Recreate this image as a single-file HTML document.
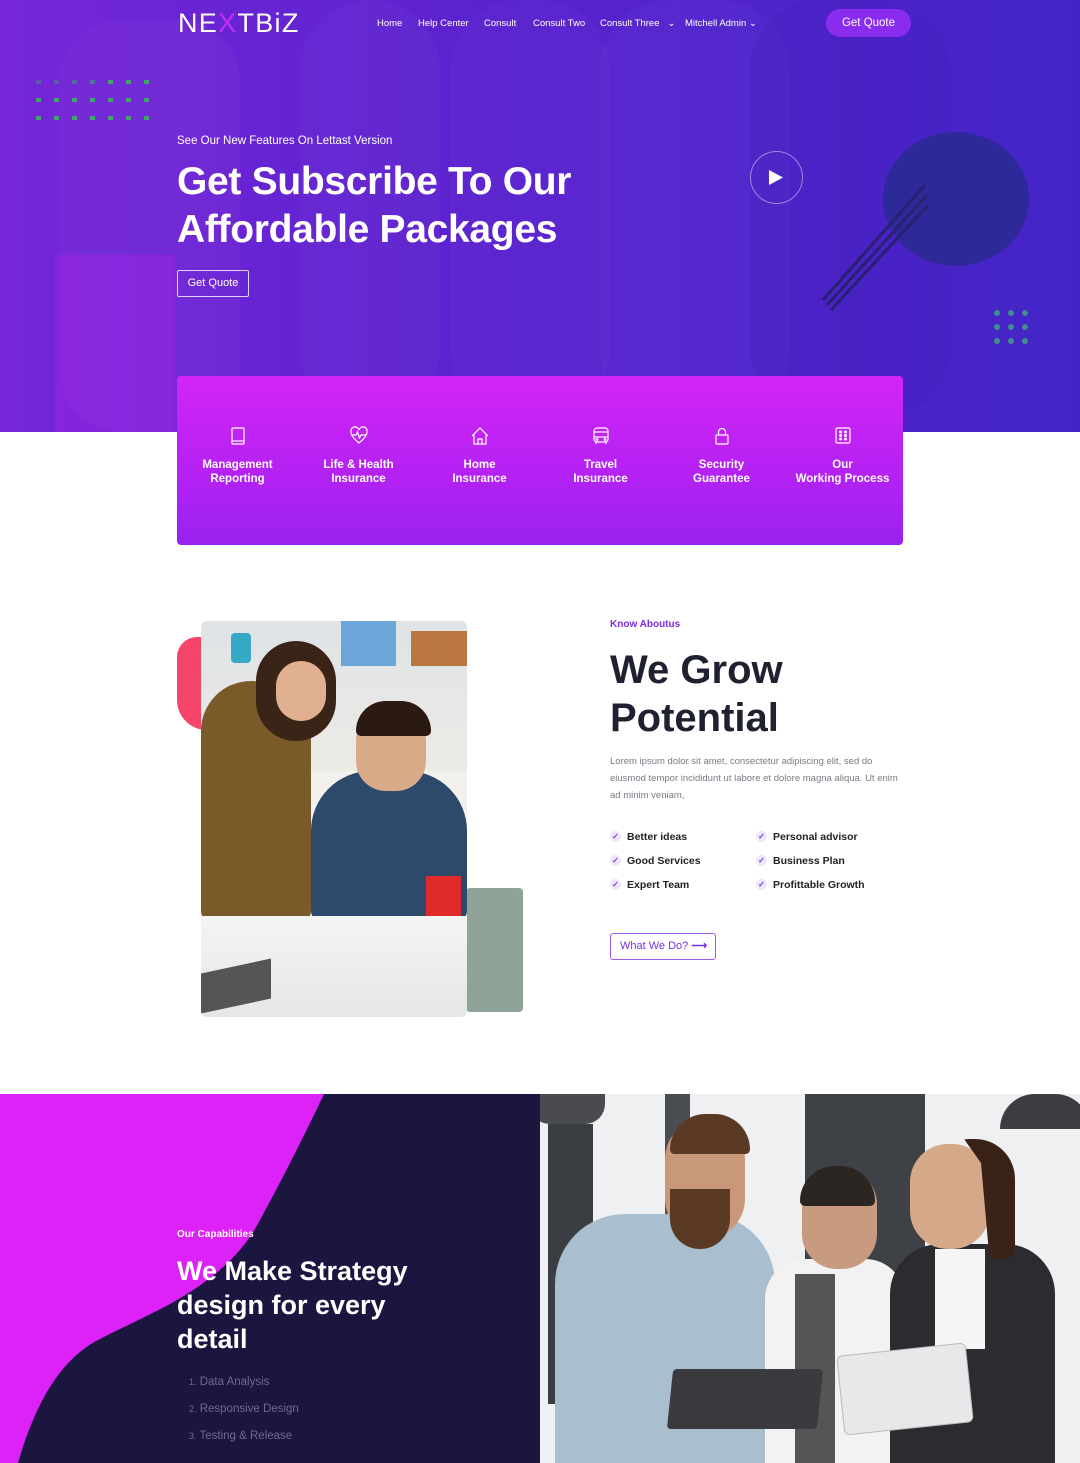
<!DOCTYPE html>
<html><head><meta charset="utf-8"><style>
*{margin:0;padding:0;box-sizing:border-box}
body{width:1080px;height:1463px;overflow:hidden;background:#fff;font-family:"Liberation Sans",sans-serif;position:relative}
.abs{position:absolute}
.hero{left:0;top:0;width:1080px;height:432px;background:linear-gradient(90deg,#7526d8 0%,#5a22cf 45%,#4325c6 100%);overflow:hidden}
.nav a{position:absolute;top:18px;color:#fff;font-size:9.5px}
.card{left:177px;top:376px;width:726px;height:169px;border-radius:4px;background:linear-gradient(180deg,#d324f8 0%,#b622f3 55%,#9a22ee 100%)}
.it{position:absolute;top:50px;width:121px;text-align:center;color:#fff;font-weight:bold;font-size:11.5px;line-height:14px}
.it svg{display:block;margin:0 auto 12px;width:18px;height:20px}
.chk{position:absolute;font-size:10.5px;color:#222;font-weight:bold}
.chk i{display:inline-block;width:11px;height:11px;border-radius:50%;background:#eee6fb;color:#7a32e6;font-style:normal;font-size:8px;text-align:center;line-height:11px;margin-right:6px;vertical-align:1px}
</style></head><body>
<div class="abs hero">
 <div class="abs" style="left:60px;top:20px;width:180px;height:412px;background:rgba(160,80,220,.12);border-radius:60px"></div>
 <div class="abs" style="left:300px;top:0;width:140px;height:420px;background:rgba(140,90,220,.1);border-radius:70px"></div>
 <div class="abs" style="left:450px;top:0;width:160px;height:420px;background:rgba(130,80,220,.1);border-radius:70px"></div>
 <div class="abs" style="left:600px;top:0;width:190px;height:420px;background:rgba(120,90,220,.1);border-radius:70px"></div>
 <div class="abs" style="left:750px;top:0;width:200px;height:420px;background:rgba(60,30,170,.15);border-radius:70px"></div>
 <div class="abs" style="left:55px;top:255px;width:120px;height:245px;background:rgba(200,30,240,.25)"></div>
 <div class="abs" style="left:883px;top:132px;width:146px;height:134px;border-radius:50%;background:#2a2a90;opacity:.85"></div>
 <svg class="abs" style="left:815px;top:175px" width="120" height="140"><g stroke="#2a2070" stroke-width="3"><line x1="8" y1="125" x2="110" y2="10"/><line x1="12" y1="130" x2="112" y2="20"/><line x1="16" y1="135" x2="113" y2="30"/></g></svg>
 <svg class="abs" style="left:35px;top:80px" width="120" height="45"><g fill="#3fa56a"><rect x="1" y="0" width="5" height="4" opacity=".4"/><rect x="19" y="0" width="5" height="4" opacity=".4"/><rect x="37" y="0" width="5" height="4" opacity=".5"/><rect x="55" y="0" width="5" height="4" opacity=".6"/><rect x="73" y="0" width="5" height="4"/><rect x="91" y="0" width="5" height="4"/><rect x="109" y="0" width="5" height="4"/>
 <rect x="1" y="18" width="5" height="4"/><rect x="19" y="18" width="5" height="4"/><rect x="37" y="18" width="5" height="4"/><rect x="55" y="18" width="5" height="4"/><rect x="73" y="18" width="5" height="4"/><rect x="91" y="18" width="5" height="4"/><rect x="109" y="18" width="5" height="4"/>
 <rect x="1" y="36" width="5" height="4"/><rect x="19" y="36" width="5" height="4"/><rect x="37" y="36" width="5" height="4"/><rect x="55" y="36" width="5" height="4"/><rect x="73" y="36" width="5" height="4"/><rect x="91" y="36" width="5" height="4"/><rect x="109" y="36" width="5" height="4"/></g></svg>
 <svg class="abs" style="left:990px;top:308px" width="40" height="40"><g fill="#3f8f8a"><circle cx="7" cy="5" r="3"/><circle cx="21" cy="5" r="3"/><circle cx="35" cy="5" r="3"/><circle cx="7" cy="19" r="3"/><circle cx="21" cy="19" r="3"/><circle cx="35" cy="19" r="3"/><circle cx="7" cy="33" r="3"/><circle cx="21" cy="33" r="3"/><circle cx="35" cy="33" r="3"/></g></svg>
 <div class="abs" style="left:178px;top:8px;color:#fff;font-size:27px;letter-spacing:1.3px">NE<span style="color:#c530f0">X</span>TBiZ</div>
 <div class="nav"><a style="left:377px">Home</a><a style="left:418px">Help Center</a><a style="left:484px">Consult</a><a style="left:533px">Consult Two</a><a style="left:600px">Consult Three &nbsp;&nbsp;⌄</a><a style="left:685px">Mitchell Admin ⌄</a></div>
 <div class="abs" style="left:826px;top:9px;width:85px;height:28px;border-radius:14px;background:#8a2cf0;color:#fff;font-size:11.5px;text-align:center;line-height:28px">Get Quote</div>
 <div class="abs" style="left:177px;top:135px;color:#fff;font-size:11.5px">See Our New Features On Lettast Version</div>
 <div class="abs" style="left:177px;top:158px;color:#fff;font-size:39px;font-weight:bold;line-height:48px;letter-spacing:-.3px">Get Subscribe To Our<br>Affordable Packages</div>
 <div class="abs" style="left:177px;top:270px;width:72px;height:27px;border:1px solid rgba(255,255,255,.8);border-radius:2px;color:#fff;font-size:11px;text-align:center;line-height:25px">Get Quote</div>
 <div class="abs" style="left:750px;top:151px;width:53px;height:53px;border:1px solid rgba(255,255,255,.45);border-radius:50%"></div>
 <svg class="abs" style="left:768px;top:169px" width="16" height="17"><path d="M1 1L15 8.5L1 16Z" fill="#fff"/></svg>
</div>
<div class="abs card">
 <div class="it" style="left:0"><svg viewBox="0 0 18 20" fill="none" stroke="#fff" stroke-width="1.2"><rect x="3" y="2" width="12" height="16" rx="1"/><line x1="3" y1="15" x2="15" y2="15"/></svg>Management<br>Reporting</div>
 <div class="it" style="left:121px"><svg viewBox="0 0 18 20" fill="none" stroke="#fff" stroke-width="1.2"><path d="M9 17C3 12 1 9 1 6A4 4 0 0 1 9 4A4 4 0 0 1 17 6C17 9 15 12 9 17Z"/><path d="M2 9H6L7.5 6L9.5 12L11 9H16"/></svg>Life &amp; Health<br>Insurance</div>
 <div class="it" style="left:242px"><svg viewBox="0 0 18 20" fill="none" stroke="#fff" stroke-width="1.2"><path d="M1 10L9 2L17 10M3 8V18H15V8M7 18V13H11V18"/></svg>Home<br>Insurance</div>
 <div class="it" style="left:363px"><svg viewBox="0 0 18 20" fill="none" stroke="#fff" stroke-width="1.2"><rect x="2" y="2" width="14" height="14" rx="3"/><line x1="2" y1="6" x2="16" y2="6"/><line x1="2" y1="11" x2="16" y2="11"/><circle cx="5" cy="13.5" r=".8"/><circle cx="13" cy="13.5" r=".8"/><path d="M4 16V18M14 16V18"/></svg>Travel<br>Insurance</div>
 <div class="it" style="left:484px"><svg viewBox="0 0 18 20" fill="none" stroke="#fff" stroke-width="1.2"><rect x="3" y="9" width="12" height="9" rx="1"/><path d="M5.5 9V6A3.5 3.5 0 0 1 12.5 6V9"/></svg>Security<br>Guarantee</div>
 <div class="it" style="left:605px"><svg viewBox="0 0 18 20" fill="none" stroke="#fff" stroke-width="1.2"><rect x="2" y="2" width="14" height="15" rx="1.5"/><g fill="#fff"><circle cx="6.5" cy="6" r=".9"/><circle cx="11.5" cy="6" r=".9"/><circle cx="6.5" cy="9.5" r=".9"/><circle cx="11.5" cy="9.5" r=".9"/><circle cx="6.5" cy="13" r=".9"/><circle cx="11.5" cy="13" r=".9"/></g></svg>Our<br>Working Process</div>
</div>
<!-- about -->
<div class="abs" style="left:177px;top:637px;width:40px;height:93px;background:#f5456a;border-radius:20px 0 0 30px"></div>
<div class="abs" style="left:466px;top:888px;width:57px;height:124px;background:#8fa399;border-radius:4px"></div>
<div class="abs" style="left:201px;top:621px;width:266px;height:396px;border-radius:6px;overflow:hidden;background:#f3f1ee">
 <div class="abs" style="left:0;top:0;width:266px;height:150px;background:linear-gradient(180deg,#dfe3e6,#ecebe6)"></div>
 <div class="abs" style="left:140px;top:0;width:55px;height:45px;background:#6aa7d8"></div>
 <div class="abs" style="left:210px;top:10px;width:56px;height:35px;background:#b97840"></div>
 <div class="abs" style="left:30px;top:12px;width:20px;height:30px;background:#35a9c8;border-radius:4px"></div>
 <div class="abs" style="left:0;top:60px;width:110px;height:240px;background:#7a5a28;border-radius:50px 60px 10px 10px"></div>
 <div class="abs" style="left:55px;top:20px;width:80px;height:100px;background:#3a2418;border-radius:40px"></div>
 <div class="abs" style="left:75px;top:40px;width:50px;height:60px;background:#e0b090;border-radius:25px"></div>
 <div class="abs" style="left:110px;top:150px;width:156px;height:150px;background:#2d4a6c;border-radius:60px 60px 10px 10px"></div>
 <div class="abs" style="left:155px;top:90px;width:70px;height:80px;background:#d9aa88;border-radius:30px"></div>
 <div class="abs" style="left:155px;top:80px;width:75px;height:35px;background:#2a1a12;border-radius:30px 30px 5px 5px"></div>
 <div class="abs" style="left:225px;top:255px;width:35px;height:45px;background:#e02a2a"></div>
 <div class="abs" style="left:0;top:295px;width:266px;height:101px;background:linear-gradient(180deg,#f4f4f4,#e4e6e8)"></div>
 <div class="abs" style="left:0;top:345px;width:70px;height:40px;background:#555;transform:skewY(-12deg)"></div>
</div>
<div class="abs" style="left:610px;top:619px;color:#7a2ee6;font-size:10px;font-weight:bold">Know Aboutus</div>
<div class="abs" style="left:610px;top:646px;color:#1f2130;font-size:40px;font-weight:bold;line-height:48px">We Grow<br>Potential</div>
<div class="abs" style="left:610px;top:753px;width:290px;color:#7a7a85;font-size:9.5px;line-height:17px">Lorem ipsum dolor sit amet, consectetur adipiscing elit, sed do eiusmod tempor incididunt ut labore et dolore magna aliqua. Ut enim ad minim veniam,</div>
<div class="chk" style="left:610px;top:831px"><i>✓</i>Better ideas</div>
<div class="chk" style="left:610px;top:855px"><i>✓</i>Good Services</div>
<div class="chk" style="left:610px;top:879px"><i>✓</i>Expert Team</div>
<div class="chk" style="left:756px;top:831px"><i>✓</i>Personal advisor</div>
<div class="chk" style="left:756px;top:855px"><i>✓</i>Business Plan</div>
<div class="chk" style="left:756px;top:879px"><i>✓</i>Profittable Growth</div>
<div class="abs" style="left:610px;top:933px;width:106px;height:27px;border:1px solid #9c5cf0;border-radius:3px;color:#7a32e6;font-size:11px;line-height:25px;padding-left:9px">What We Do? <span style="font-weight:bold">⟶</span></div>
<!-- bottom -->
<div class="abs" style="left:0;top:1094px;width:540px;height:369px;background:#1b1640;overflow:hidden">
 <svg class="abs" style="left:0;top:0" width="540" height="369"><path d="M0 0H324C305 40 280 90 255 135C240 160 215 185 170 210C140 226 115 237 100 245C60 265 35 310 18 369H0Z" fill="#dc22f6"/></svg>
 <div class="abs" style="left:177px;top:135px;color:#fff;font-size:10px;font-weight:bold">Our Capabilities</div>
 <div class="abs" style="left:177px;top:160px;color:#fff;font-size:27px;font-weight:bold;line-height:34px">We Make Strategy<br>design for every<br>detail</div>
 <div class="abs" style="left:189px;top:275px;color:#6f6a8e;font-size:11.5px;line-height:27px"><span style="font-size:9px">1.</span> Data Analysis<br><span style="font-size:9px">2.</span> Responsive Design<br><span style="font-size:9px">3.</span> Testing &amp; Release</div>
</div>
<div class="abs" style="left:540px;top:1094px;width:540px;height:369px;background:#eef0f1;overflow:hidden">
 <div class="abs" style="left:8px;top:30px;width:45px;height:280px;background:#3a3d42"></div>
 <div class="abs" style="left:125px;top:0;width:25px;height:200px;background:#4a4d52"></div>
 <div class="abs" style="left:265px;top:0;width:120px;height:180px;background:#3e4146"></div>
 <div class="abs" style="left:-10px;top:0;width:75px;height:30px;background:#4a4b4e;border-radius:0 0 20px 20px"></div>
 <div class="abs" style="left:460px;top:0;width:90px;height:35px;background:#3c3d40;border-radius:40px 40px 0 0"></div>
 <div class="abs" style="left:15px;top:120px;width:220px;height:260px;background:#a9bfcf;border-radius:70px 70px 0 0"></div>
 <div class="abs" style="left:125px;top:25px;width:80px;height:120px;background:#c89878;border-radius:40px"></div>
 <div class="abs" style="left:130px;top:20px;width:80px;height:40px;background:#5a3a25;border-radius:40px 40px 5px 5px"></div>
 <div class="abs" style="left:130px;top:95px;width:60px;height:60px;background:#5a3a25;border-radius:0 0 30px 30px"></div>
 <div class="abs" style="left:225px;top:165px;width:140px;height:204px;background:#f2f2f2;border-radius:40px 40px 0 0"></div>
 <div class="abs" style="left:255px;top:180px;width:40px;height:189px;background:#555"></div>
 <div class="abs" style="left:262px;top:75px;width:75px;height:100px;background:#c89a80;border-radius:35px"></div>
 <div class="abs" style="left:260px;top:72px;width:75px;height:40px;background:#2c2622;border-radius:35px 35px 5px 5px"></div>
 <div class="abs" style="left:350px;top:150px;width:165px;height:219px;background:#2c2c30;border-radius:50px 50px 0 0"></div>
 <div class="abs" style="left:395px;top:155px;width:50px;height:100px;background:#f5f5f5"></div>
 <div class="abs" style="left:370px;top:50px;width:80px;height:105px;background:#d6a88a;border-radius:38px"></div>
 <div class="abs" style="left:390px;top:45px;width:85px;height:120px;background:#3a2218;border-radius:40px 40px 10px 10px;clip-path:polygon(40% 0,100% 0,100% 100%,70% 100%,60% 20%)"></div>
 <div class="abs" style="left:130px;top:275px;width:150px;height:60px;background:#3a3b3e;border-radius:4px;transform:skewX(-6deg)"></div>
 <div class="abs" style="left:300px;top:255px;width:130px;height:80px;background:#e6e8ea;border:1px solid #bbb;border-radius:6px;transform:rotate(-6deg)"></div>
</div>
</body></html>
